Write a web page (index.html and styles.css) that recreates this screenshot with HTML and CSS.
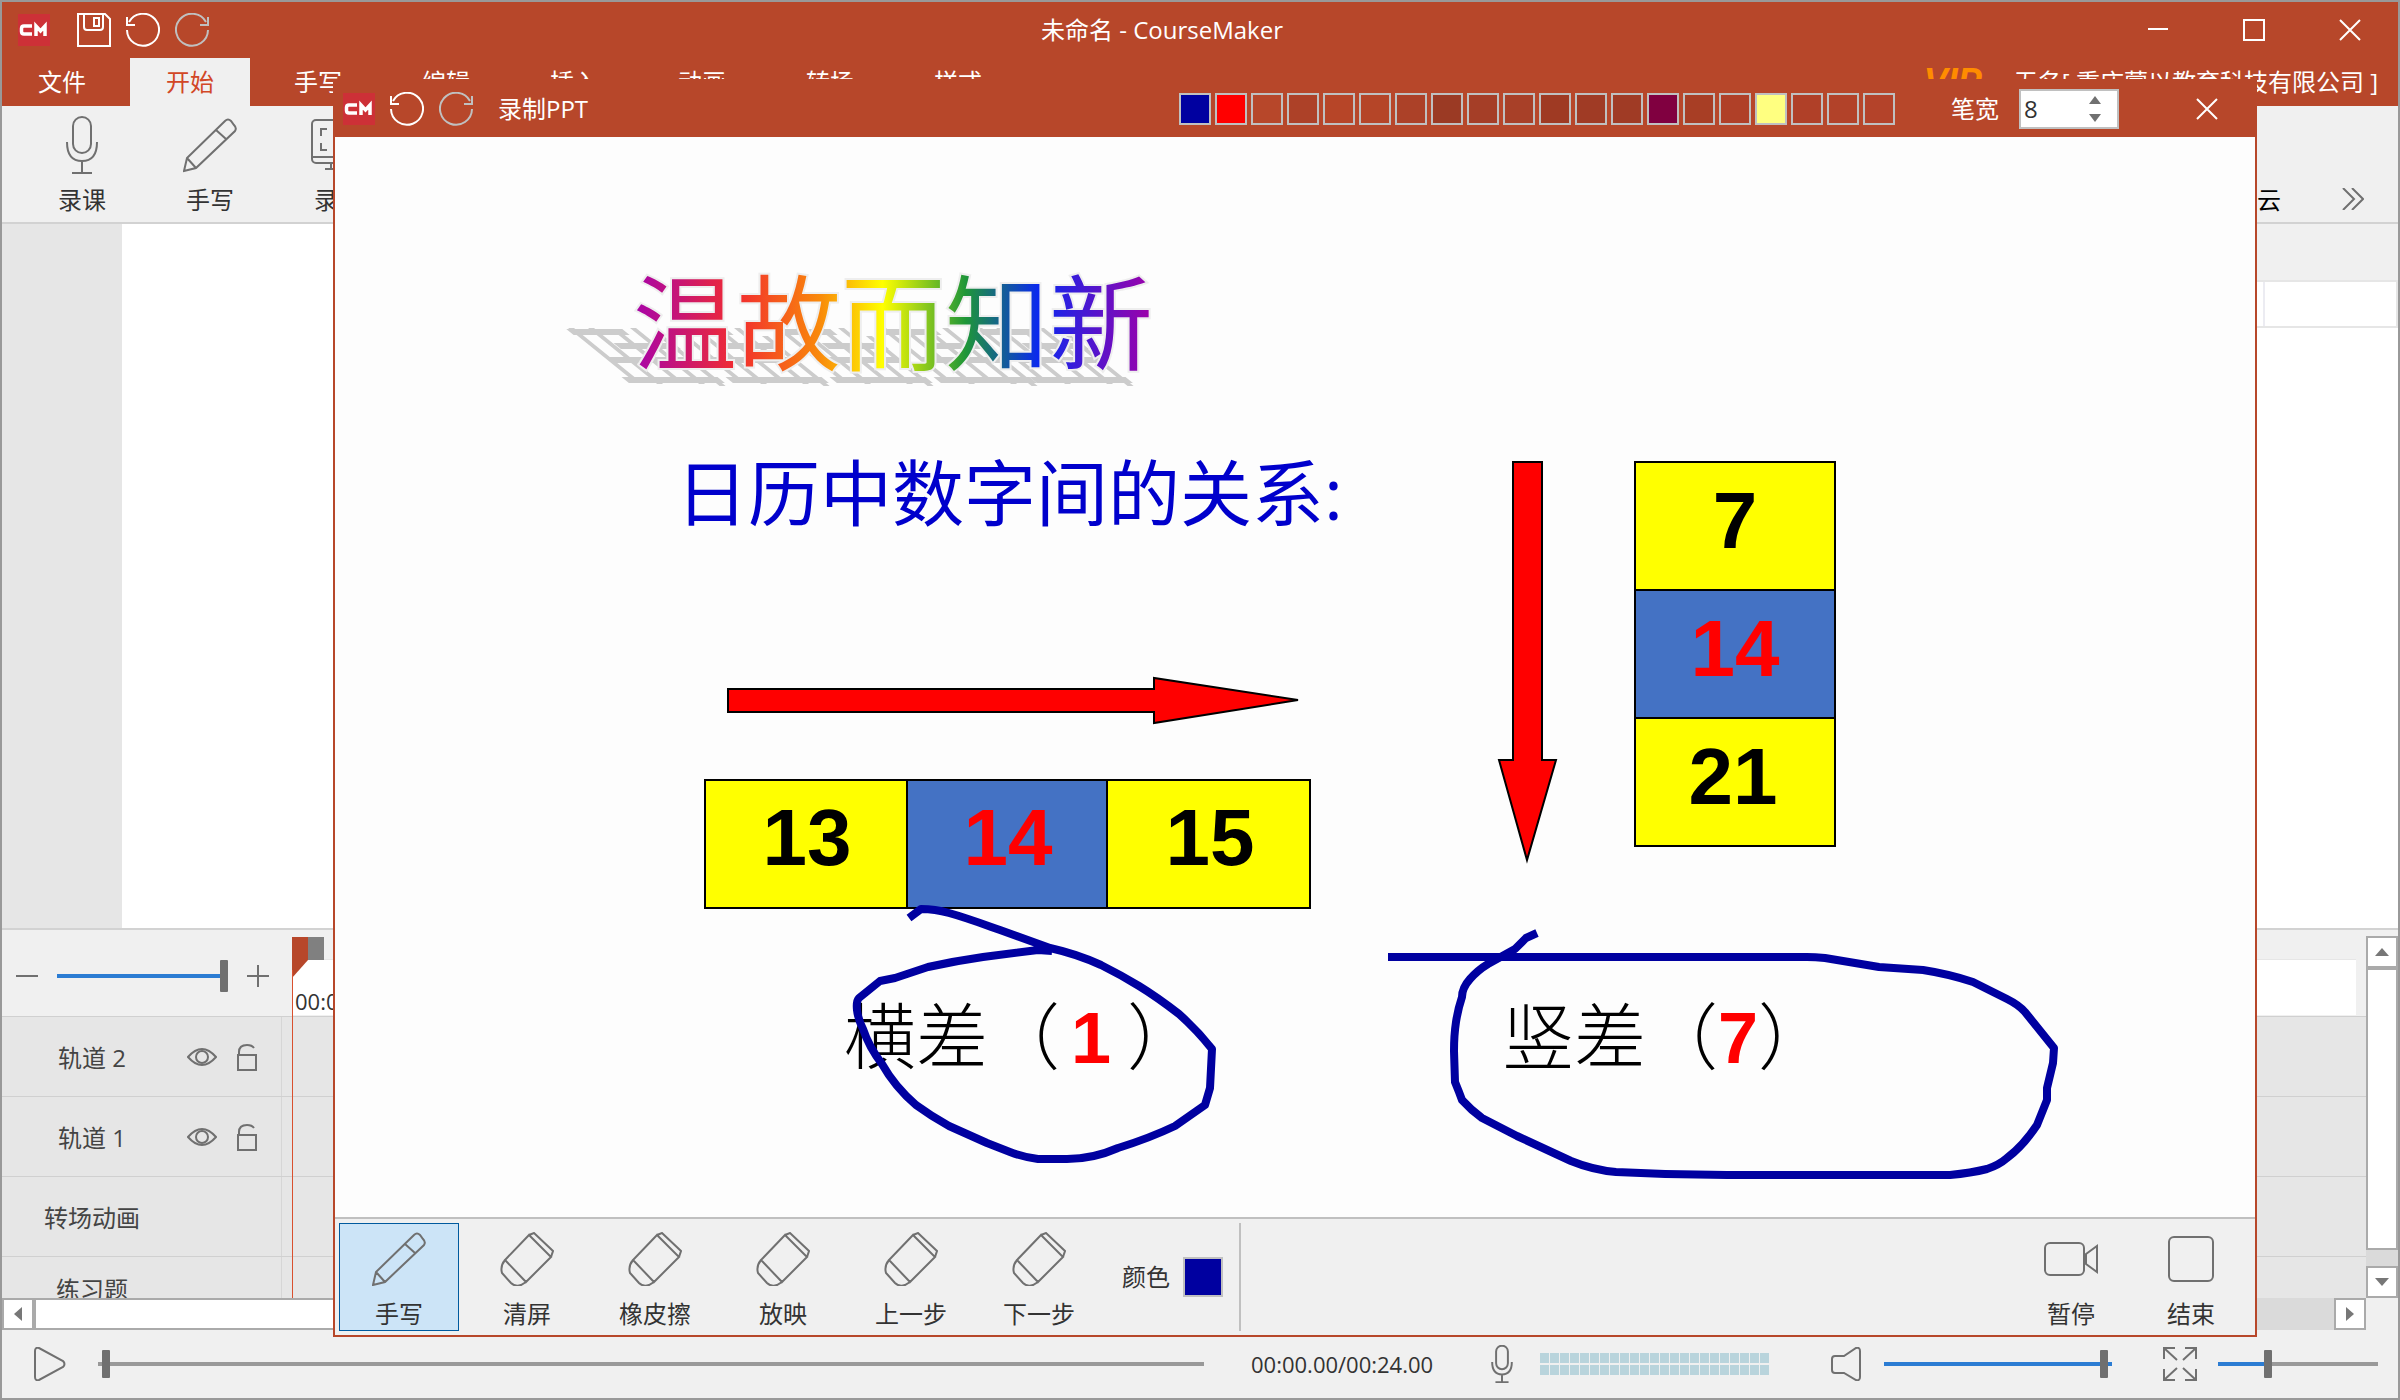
FILE: index.html
```html
<!DOCTYPE html>
<html lang="zh-CN">
  <head>
    <meta charset="utf-8">
    <title>未命名 - CourseMaker</title>
    <link rel="stylesheet" href="styles.css">
  </head>
  <body>
    <!-- icon sprite -->
    <svg class="sprite" aria-hidden="true">
      <symbol id="i-logo" viewBox="0 0 32 32">
        <rect width="32" height="32" fill="#cd3037"/>
        <path d="M14 12H6q-2.500 0-2.500 2.500v3Q3.500 20 6 20h8M18 22V12l4.500 5L27 12v10" fill="none" stroke="#fff" stroke-width="3.500"/>
      </symbol>
      <symbol id="i-save" viewBox="0 0 34 34">
        <path d="M1 1H28L33 6V33H1ZM7 1V14Q7 17 10 17H23Q26 17 26 14V1M17 5H22V13H17Z"/>
      </symbol>
      <symbol id="i-undo" viewBox="0 0 34 34">
        <path d="M1 17A16 16 0 1 0 3 9M1 4V12H9"/>
      </symbol>
      <symbol id="i-redo" viewBox="0 0 34 34">
        <path d="M33 17A16 16 0 1 1 31 9M33 4V12H25"/>
      </symbol>
      <symbol id="i-close" viewBox="0 0 22 22"><path d="M1 1L21 21M21 1L1 21"/></symbol>
      <symbol id="i-mic" viewBox="0 0 54 58">
        <rect x="18" y="1" width="18" height="36" rx="9"/>
        <path d="M12 26Q12 45 27 45Q42 45 42 26M27 45V57M17 57H37"/>
      </symbol>
      <symbol id="i-pencil" viewBox="0 0 54 54">
        <path d="M1 53L4 40L42 3Q45 0 48 3L51 7Q54 10 52 13L13 50ZM4 40L13 50M33 12L43 21"/>
      </symbol>
      <symbol id="i-screen" viewBox="0 0 54 54">
        <rect x="1" y="2" width="52" height="43" rx="4"/>
        <path d="M1 39H53M16 11H10V18M10 25V32H16M38 11H44V18M44 25V32H38M20 45V51M34 45V51M14 51H40"/>
      </symbol>
      <symbol id="i-eraser" viewBox="0 0 54 54">
        <path d="M29 3L51 25L26 50L5 28ZM29 3L34 1L53 19L51 25M5 28Q0 34 2 41L11 51Q15 55 21 53L26 50"/>
      </symbol>
      <symbol id="i-camera" viewBox="0 0 54 54">
        <rect x="1" y="11" width="39" height="32" rx="5"/>
        <path d="M42 22L53 14V40L42 32Z"/>
      </symbol>
      <symbol id="i-stop" viewBox="0 0 54 54"><rect x="5" y="5" width="44" height="44" rx="5"/></symbol>
      <symbol id="i-eye" viewBox="0 0 30 20">
        <path d="M1 10Q8 2 15 2T29 10Q22 18 15 18T1 10Z"/>
        <circle cx="15" cy="10" r="6"/>
      </symbol>
      <symbol id="i-lock" viewBox="0 0 20 28">
        <path d="M1 12H19V27H1ZM2 12V9Q2 2 10 2Q15 2 17 5"/>
      </symbol>
      <symbol id="i-play" viewBox="0 0 32 34">
        <path d="M1 4Q1 0 5 1L29 14Q32 17 29 20L5 33Q1 34 1 30Z"/>
      </symbol>
      <symbol id="i-speaker" viewBox="0 0 30 34">
        <path d="M13 9H4Q1 9 1 12V23Q1 26 4 26H13L25 33Q29 34 29 30V4Q29 0 25 1Z"/>
      </symbol>
      <symbol id="i-full" viewBox="0 0 34 34">
        <path d="M1 12V1H12M1 1L14 13M22 1H33V12M33 1L20 13M1 22V33H12M1 33L14 21M33 22V33H22M33 33L20 21"/>
      </symbol>
      <symbol id="i-more" viewBox="0 0 22 22"><path d="M1 0L12 11L1 22M10 0L21 11L10 22"/></symbol>
    </svg>

    <div class="app">
      <header class="titlebar">
        <div class="quick">
          <svg class="logo"><use href="#i-logo"/></svg>
          <button class="quick-save" aria-label="保存"><svg class="icon i34"><use href="#i-save"/></svg></button>
          <button aria-label="撤销"><svg class="icon i34"><use href="#i-undo"/></svg></button>
          <button class="off" aria-label="重做"><svg class="icon i34"><use href="#i-redo"/></svg></button>
        </div>
        <h1>未命名 - CourseMaker</h1>
        <div class="win-buttons">
          <button aria-label="最小化"><svg class="icon i22" viewBox="0 0 22 22"><path d="M1 10H21"/></svg></button>
          <button aria-label="最大化"><svg class="icon i22" viewBox="0 0 22 22"><path d="M1 1H21V21H1Z"/></svg></button>
          <button aria-label="关闭"><svg class="icon i22"><use href="#i-close"/></svg></button>
        </div>
      </header>

      <nav class="tabs">
        <button>文件</button>
        <button class="active">开始</button>
        <button>手写</button>
        <button>编辑</button>
        <button>插入</button>
        <button>动画</button>
        <button>转场</button>
        <button>样式</button>
        <span class="vip">VIP</span>
        <span class="account">无名[ 重庆蒙以教育科技有限公司 ]</span>
      </nav>

      <div class="ribbon">
        <button class="tool"><svg class="icon i58"><use href="#i-mic"/></svg>录课</button>
        <button class="tool"><svg class="icon i58"><use href="#i-pencil"/></svg>手写</button>
        <button class="tool"><svg class="icon i58"><use href="#i-screen"/></svg>录屏</button>
        <span class="cloud">云</span>
        <button class="more" aria-label="更多"><svg class="icon i22"><use href="#i-more"/></svg></button>
      </div>

      <main class="workspace">
        <aside class="pages"></aside>
        <section class="stage"></section>
        <aside class="props">
          <div class="props-head"></div>
          <div class="props-row"><div></div><div></div></div>
        </aside>
      </main>

      <section class="timeline">
        <div class="timeline-body">
          <div class="timeline-head">
            <div class="zoom">
              <svg class="icon i22" viewBox="0 0 22 22"><path d="M0 11H22"/></svg>
              <input type="range" class="tall" aria-label="时间轴缩放" value="100" style="--fill: 100%">
              <svg class="icon i22" viewBox="0 0 22 22"><path d="M0 11H22M11 0V22"/></svg>
            </div>
            <div class="ruler">00:00</div>
          </div>
          <div class="track">
            <span class="track-name">轨道 2</span>
            <svg class="icon eye"><use href="#i-eye"/></svg>
            <svg class="icon lock"><use href="#i-lock"/></svg>
          </div>
          <div class="track">
            <span class="track-name">轨道 1</span>
            <svg class="icon eye"><use href="#i-eye"/></svg>
            <svg class="icon lock"><use href="#i-lock"/></svg>
          </div>
          <div class="track"><span class="track-name">转场动画</span></div>
          <div class="track last"><span class="track-name">练习题</span></div>
          <svg class="playhead" viewBox="0 0 32 41">
            <path d="M0 0H16V23L0 41Z" fill="#b7472a"/>
            <path d="M16 0H32V23H16Z" fill="#808080"/>
          </svg>
        </div>
        <div class="vscroll">
          <button aria-label="向上"><svg viewBox="0 0 14 8"><path d="M7 0L14 8H0Z"/></svg></button>
          <div class="thumb"></div>
          <button class="end" aria-label="向下"><svg viewBox="0 0 14 8"><path d="M0 0H14L7 8Z"/></svg></button>
        </div>
        <div class="hscroll">
          <button aria-label="向左"><svg class="side" viewBox="0 0 8 14"><path d="M8 0V14L0 7Z"/></svg></button>
          <div class="thumb"></div>
          <button class="end" aria-label="向右"><svg class="side" viewBox="0 0 8 14"><path d="M0 0L8 7L0 14Z"/></svg></button>
        </div>
      </section>

      <footer class="player">
        <button aria-label="播放"><svg class="icon i34"><use href="#i-play"/></svg></button>
        <input type="range" class="seek" aria-label="播放进度" min="0" max="275" value="1" style="--fill: 0%">
        <time>00:00.00/00:24.00</time>
        <svg class="icon mic"><use href="#i-mic"/></svg>
        <div class="meter"><i></i><i></i></div>
        <svg class="icon i34 speaker"><use href="#i-speaker"/></svg>
        <input type="range" class="volume" aria-label="音量" value="98" style="--fill: 100%">
        <button class="full" aria-label="全屏"><svg class="icon i34"><use href="#i-full"/></svg></button>
        <input type="range" class="scale" aria-label="缩放" value="30" style="--fill: 30%">
      </footer>

      <!-- recording window -->
      <div class="recorder" role="dialog" aria-labelledby="rec-title">
        <div class="rec-head">
          <svg class="logo"><use href="#i-logo"/></svg>
          <button aria-label="撤销"><svg class="icon i34"><use href="#i-undo"/></svg></button>
          <button class="off" aria-label="重做"><svg class="icon i34"><use href="#i-redo"/></svg></button>
          <h2 id="rec-title">录制PPT</h2>
          <div class="swatches">
            <button style="background: #0000a0" aria-label="颜色 1"></button>
            <button style="background: #ff0000" aria-label="颜色 2"></button>
            <button style="background: #b7472a" aria-label="颜色 3"></button>
            <button style="background: #ad4128" aria-label="颜色 4"></button>
            <button style="background: #b74528" aria-label="颜色 5"></button>
            <button style="background: #b54528" aria-label="颜色 6"></button>
            <button style="background: #ac4128" aria-label="颜色 7"></button>
            <button style="background: #9b3a24" aria-label="颜色 8"></button>
            <button style="background: #a53e27" aria-label="颜色 9"></button>
            <button style="background: #a84028" aria-label="颜色 10"></button>
            <button style="background: #9f3a23" aria-label="颜色 11"></button>
            <button style="background: #a03b25" aria-label="颜色 12"></button>
            <button style="background: #a03b25" aria-label="颜色 13"></button>
            <button style="background: #800040" aria-label="颜色 14"></button>
            <button style="background: #a83e25" aria-label="颜色 15"></button>
            <button style="background: #b04028" aria-label="颜色 16"></button>
            <button style="background: #ffff80" aria-label="颜色 17"></button>
            <button style="background: #b04028" aria-label="颜色 18"></button>
            <button style="background: #b24229" aria-label="颜色 19"></button>
            <button style="background: #b4432a" aria-label="颜色 20"></button>
          </div>
          <label for="pen">笔宽</label>
          <div class="stepper">
            <input id="pen" type="text" inputmode="numeric" value="8">
            <div class="steps">
              <button aria-label="增大"><svg viewBox="0 0 12 8"><path d="M6 0L12 8H0Z"/></svg></button>
              <button aria-label="减小"><svg viewBox="0 0 12 8"><path d="M0 0H12L6 8Z"/></svg></button>
            </div>
          </div>
          <button class="rec-close" aria-label="关闭"><svg class="icon i22"><use href="#i-close"/></svg></button>
        </div>

        <svg class="slide" viewBox="0 0 1920 1080">
          <defs>
            <linearGradient id="rainbow">
              <stop offset="0" stop-color="#a603ab"/>
              <stop offset="0.200" stop-color="#f22c2f"/>
              <stop offset="0.360" stop-color="#f98a0a"/>
              <stop offset="0.480" stop-color="#ffff00"/>
              <stop offset="0.640" stop-color="#1e9638"/>
              <stop offset="0.780" stop-color="#0a28f0"/>
              <stop offset="1" stop-color="#a000a8"/>
            </linearGradient>
            <g id="cast">
              <path d="M10 0V52M30 0V56M52 4V52M72 0V56M90 8V58M4 4H60M34 18H94M8 32H90M0 52H96"/>
            </g>
          </defs>

          <!-- cast shadow behind the heading -->
          <g class="cast" transform="translate(306 191) translate(-80 0) skewX(51)">
            <use href="#cast"/>
            <use href="#cast" x="104"/>
            <use href="#cast" x="208"/>
            <use href="#cast" x="312"/>
            <use href="#cast" x="408"/>
          </g>
          <text class="wordart" x="298" y="226">温故而知新</text>
          <text class="subject" x="341" y="383">日历中数字间的关系:</text>

          <g class="arrow">
            <path d="M393 552H819V541L963 563L819 586V575H393Z"/>
            <path d="M1178 325H1207V623H1221L1192 723L1164 623H1178Z"/>
          </g>

          <g class="cells">
            <rect x="370" y="643" width="202" height="128"/>
            <rect class="mid" x="572" y="643" width="200" height="128"/>
            <rect x="772" y="643" width="203" height="128"/>
            <rect x="1300" y="325" width="200" height="128"/>
            <rect class="mid" x="1300" y="453" width="200" height="128"/>
            <rect x="1300" y="581" width="200" height="128"/>
          </g>
          <g class="digits">
            <text x="472" y="728">13</text>
            <text class="red" x="673" y="728">14</text>
            <text x="875" y="728">15</text>
            <text x="1400" y="411">7</text>
            <text class="red" x="1400" y="539">14</text>
            <text x="1398" y="667">21</text>
          </g>

          <text class="answer" x="509" y="926">横差（<tspan class="num" x="736">1</tspan><tspan x="792">）</tspan></text>
          <text class="answer" x="1167" y="926">竖差（<tspan class="num">7</tspan>）</text>

          <g class="ink">
            <path d="M574 781L586 772Q600 772 614 776C632 781 648 787 665 793L715 811Q742 817 766 828Q786 838 804 849T844 877Q862 893 877 912L875 951L870 968L840 989Q815 1001 783 1011Q758 1022 732 1022H703Q688 1020 675 1015L652 1006L614 989Q596 979 581 968Q560 950 547 927Q534 910 528 892Q523 882 522 873T524 861L545 844L560 841L593 830Q620 824 648 820L703 813L717 814"/>
            <path d="M1202 796L1191 801L1180 812L1153 827Q1143 833 1135 842T1127 860Q1123 872 1121 885T1119 914L1120 945L1124 955L1127 963Q1136 973 1147 981L1182 999L1236 1024Q1258 1033 1281 1035Q1336 1038 1392 1038H1615Q1636 1036 1652 1032Q1664 1028 1672 1021Q1688 1009 1702 988L1712 963V951L1718 926L1719 911L1690 875Q1684 868 1672 862L1638 845Q1614 837 1588 833L1544 830L1490 821Q1480 820 1472 820H1053"/>
          </g>
        </svg>

        <div class="rec-tools">
          <button class="tool active"><svg class="icon i54"><use href="#i-pencil"/></svg>手写</button>
          <button class="tool"><svg class="icon i54"><use href="#i-eraser"/></svg>清屏</button>
          <button class="tool"><svg class="icon i54"><use href="#i-eraser"/></svg>橡皮擦</button>
          <button class="tool"><svg class="icon i54"><use href="#i-eraser"/></svg>放映</button>
          <button class="tool"><svg class="icon i54"><use href="#i-eraser"/></svg>上一步</button>
          <button class="tool"><svg class="icon i54"><use href="#i-eraser"/></svg>下一步</button>
          <div class="color">
            <span id="color-label">颜色</span>
            <button aria-labelledby="color-label"></button>
          </div>
          <div class="rec-actions">
            <button class="tool"><svg class="icon i54"><use href="#i-camera"/></svg>暂停</button>
            <button class="tool"><svg class="icon i54"><use href="#i-stop"/></svg>结束</button>
          </div>
        </div>
      </div>
    </div>
  </body>
</html>
```

FILE: styles.css
```css
* {
  box-sizing: border-box;
}
body {
  margin: 0;
  font: 24px/32px "Open Sans", "Noto Sans CJK SC", sans-serif;
  color: #333;
}
button {
  margin: 0;
  padding: 0;
  border: 0;
  background: none;
  color: inherit;
  font: inherit;
}
button svg {
  display: block;
}
h1, h2 {
  margin: 0;
  font-size: 24px;
  font-weight: normal;
}
.sprite {
  display: none;
}
.icon {
  display: block;
  flex: none;
  fill: none;
  stroke: #707070;
  stroke-width: 2;
}
.i22 { width: 22px; height: 22px; }
.i34 { width: 34px; height: 34px; }
.i54 { width: 54px; height: 54px; }
.i58 { width: 54px; height: 58px; }
.logo {
  width: 32px;
  height: 32px;
}

.app {
  position: relative;
  display: flex;
  flex-direction: column;
  height: 100vh;
  border: 2px solid #999;
  background: #f0f0f0;
  overflow: hidden;
}

/* title bar and tabs */
.titlebar, .tabs, .rec-head {
  display: flex;
  flex: none;
  align-items: center;
  background: #b7472a;
  color: #fff;
}
.titlebar .icon, .rec-head .icon {
  stroke: #fff;
}
.titlebar .off .icon, .rec-head .off .icon {
  stroke: #c0c0c0;
}
.titlebar {
  height: 56px;
}
.titlebar h1 {
  flex: 1;
  text-align: center;
}
.quick {
  display: flex;
  align-items: center;
  gap: 15px;
  width: 212px;
  padding-left: 16px;
}
.quick-save {
  margin-left: 12px;
}
.win-buttons {
  display: flex;
}
.win-buttons button, .rec-close {
  display: flex;
  justify-content: center;
  width: 96px;
}
.tabs {
  gap: 8px;
  height: 48px;
}
.tabs button {
  width: 120px;
  height: 48px;
}
.tabs .active {
  background: #f0f0f0;
  color: #d24726;
}
.vip {
  margin-left: auto;
  font: italic bold 36px/32px "Liberation Sans", sans-serif;
  color: #ff8c00;
}
.account {
  margin: 0 20px 0 24px;
}

/* ribbon */
.ribbon {
  display: flex;
  flex: none;
  gap: 8px;
  height: 118px;
  padding: 10px 34px 0 20px;
  border-bottom: 2px solid #d2d2d2;
}
.tool {
  display: flex;
  flex-direction: column;
  align-items: center;
  gap: 10px;
  width: 120px;
}
.cloud {
  margin-left: auto;
  padding-top: 68px;
  color: #000;
}
.more {
  align-self: flex-start;
  margin: 72px 0 0 53px;
}

/* workspace */
.workspace {
  display: flex;
  flex: 1;
  min-height: 0;
  background: #fff;
}
.pages {
  width: 120px;
  background: #e6e6e6;
}
.stage {
  flex: 1;
}
.props {
  width: 400px;
}
.props-head {
  height: 56px;
  background: #f0f0f0;
}
.props-row {
  display: flex;
  height: 48px;
  border: 2px solid #e6e6e6;
}
.props-row div {
  flex: 1;
}
.props-row div:first-child {
  flex: 2;
  border-right: 2px solid #ececf2;
}

/* timeline */
.timeline {
  display: grid;
  grid-template-columns: 1fr 32px;
  grid-template-rows: 1fr 32px;
  flex: none;
  height: 402px;
  border-top: 2px solid #d2d2d2;
}
.timeline-body {
  position: relative;
  overflow: hidden;
}
.timeline-head {
  display: flex;
  height: 86px;
}
.zoom {
  display: flex;
  align-items: center;
  gap: 19px;
  width: 290px;
  padding: 6px 23px 0 14px;
}
.zoom input {
  flex: 1;
  min-width: 0;
}
.ruler {
  flex: 1;
  margin: 29px 10px 1px 0;
  padding: 25px 0 0 3px;
  border-top: 1px solid #e6e6e6;
  background: #fff;
  font-size: 22px;
}
.track {
  display: flex;
  align-items: center;
  height: 80px;
  border-top: 1px solid #d0d0d0;
  background: linear-gradient(#d6d6d6, #d6d6d6) 279px 0 / 1px 100% no-repeat #e6e6e6;
  color: #444;
}
.track.last {
  height: 64px;
}
.track-name {
  width: 180px;
  padding-top: 2px;
  text-align: center;
}
.eye {
  width: 30px;
  height: 20px;
  margin: 0 20px 0 5px;
}
.lock {
  width: 20px;
  height: 28px;
}
.playhead {
  position: absolute;
  top: 7px;
  left: 290px;
  width: 32px;
  height: 41px;
}
.timeline-body::after {
  content: "";
  position: absolute;
  top: 40px;
  bottom: 0;
  left: 290px;
  width: 1px;
  background: #d9502e;
}
.vscroll, .hscroll {
  display: flex;
  background: #dadada;
}
.vscroll {
  flex-direction: column;
  margin-top: 6px;
}
.vscroll button, .hscroll button, .thumb {
  flex: none;
  display: flex;
  align-items: center;
  justify-content: center;
  width: 32px;
  height: 32px;
  border: 2px solid #aaa;
  background: #fff;
}
.vscroll .thumb {
  flex: 1;
  margin-bottom: 16px;
}
.hscroll .thumb {
  flex: 1;
  margin-right: 160px;
}
.vscroll svg, .hscroll svg {
  width: 14px;
  height: 8px;
  fill: #777;
}
.hscroll .side {
  width: 8px;
  height: 14px;
}

/* sliders */
input[type=range] {
  -webkit-appearance: none;
  appearance: none;
  height: 32px;
  margin: 0;
  background: linear-gradient(to right, #2b7cd3 var(--fill), #999 var(--fill)) center / 100% 4px no-repeat;
}
input[type=range]::-webkit-slider-thumb {
  -webkit-appearance: none;
  width: 8px;
  height: 28px;
  border-radius: 1px;
  background: #707070;
}
input.tall::-webkit-slider-thumb {
  height: 32px;
}

/* player */
.player {
  display: flex;
  flex: none;
  align-items: center;
  height: 68px;
  padding: 0 20px 0 31px;
}
.player .seek {
  flex: 1;
  min-width: 0;
  margin: 0 47px 0 31px;
}
.player time {
  width: 190px;
  font-size: 22px;
  white-space: nowrap;
}
.mic {
  width: 36px;
  height: 38px;
  margin: 0 20px 0 43px;
}
.player .mic {
  stroke-width: 3;
}
.meter {
  display: flex;
  flex-direction: column;
  gap: 2px;
  width: 229px;
}
.meter i {
  height: 10px;
  background: repeating-linear-gradient(to right, #b9d4dc 0 9px, #f0f0f0 9px 10px);
}
.speaker {
  margin: 0 21px 0 60px;
}
.volume {
  width: 228px;
}
.full {
  margin: 0 21px 0 51px;
}
.scale {
  width: 160px;
}

/* recording window, floats over the editor */
.recorder {
  position: absolute;
  top: 77px;
  right: 141px;
  bottom: 61px;
  left: 331px;
  display: flex;
  flex-direction: column;
  border: 2px solid #b7472a;
  background: #fdfdfd;
}
.rec-head {
  height: 56px;
  padding-left: 8px;
  gap: 15px;
}
.rec-head h2 {
  flex: 1;
  margin-left: 10px;
}
.swatches {
  display: flex;
  gap: 4px;
}
.swatches button {
  width: 32px;
  height: 32px;
  border: 2px solid #c0c0c0;
}
.rec-head label {
  margin-left: 41px;
}
.stepper {
  display: flex;
  width: 100px;
  height: 40px;
  margin: 0 25px 0 5px;
  border: 2px solid #c0c0c0;
  background: #fff;
}
.stepper input {
  flex: 1;
  min-width: 0;
  padding: 0 3px;
  border: 0;
  background: none;
  color: #333;
  font: inherit;
}
.steps {
  display: flex;
  flex-direction: column;
  justify-content: center;
  gap: 10px;
  width: 28px;
}
.steps svg {
  width: 12px;
  height: 8px;
  fill: #707070;
}

/* slide */
.slide {
  flex: 1;
  min-height: 0;
  width: 100%;
}
.cast {
  fill: none;
  stroke: #ccc;
  stroke-width: 6;
}
.wordart {
  font-size: 104px;
  fill: url(#rainbow);
  stroke: #eee;
  stroke-width: 4;
  paint-order: stroke;
}
.subject {
  font-size: 72px;
  fill: #0000cc;
}
.arrow path {
  fill: #f00;
  stroke: #000;
  stroke-width: 2;
}
.cells rect {
  fill: #ff0;
  stroke: #000;
  stroke-width: 2;
}
.cells .mid {
  fill: #4472c4;
}
.digits text {
  font: bold 80px "Liberation Sans", sans-serif;
  text-anchor: middle;
}
.digits .red {
  fill: #f00;
}
.answer {
  font-size: 72px;
  font-weight: 300;
  fill: #000;
}
.answer .num {
  font-family: "Liberation Sans", sans-serif;
  font-weight: bold;
  fill: #f00;
}
.ink path {
  fill: none;
  stroke: #0000a0;
  stroke-width: 8;
  stroke-linejoin: round;
}

/* recording tools */
.rec-tools {
  display: flex;
  flex: none;
  gap: 8px;
  height: 118px;
  padding: 4px;
  border-top: 2px solid #c0c0c0;
  background: #f0f0f0;
}
.rec-tools .tool {
  height: 108px;
  padding-top: 8px;
  border: 1px solid transparent;
  gap: 12px;
}
.rec-tools .active {
  border-color: #005a9e;
  background: #cce4f7;
}
.color {
  display: flex;
  align-items: center;
  gap: 13px;
  height: 108px;
  margin-left: 15px;
  padding-right: 16px;
  border-right: 2px solid #c0c0c0;
}
.color button {
  width: 40px;
  height: 40px;
  border: 2px solid #c0c0c0;
  background: #0000a0;
}
.rec-actions {
  display: flex;
  margin-left: auto;
}
```
